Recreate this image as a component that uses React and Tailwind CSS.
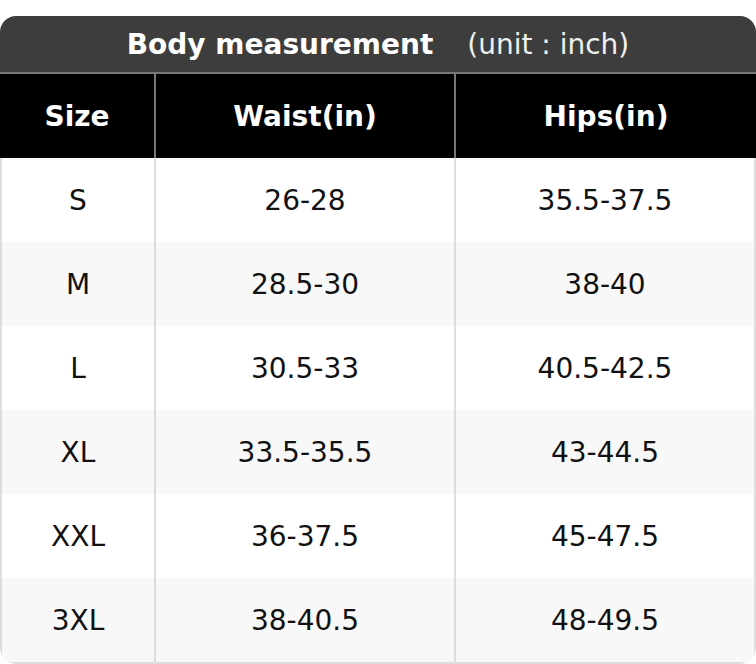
import React from 'react';

const rows = [
  ['S', '26-28', '35.5-37.5'],
  ['M', '28.5-30', '38-40'],
  ['L', '30.5-33', '40.5-42.5'],
  ['XL', '33.5-35.5', '43-44.5'],
  ['XXL', '36-37.5', '45-47.5'],
  ['3XL', '38-40.5', '48-49.5'],
];

const App = () => (
  <div className="min-h-screen bg-white pt-4" style={{ fontFamily: '"DejaVu Sans", sans-serif' }}>
    <div className="overflow-hidden rounded-2xl">
      <div className="flex h-[56px] items-center justify-center gap-[34px] bg-[#3d3d3d] pt-[2px] text-[28px] text-white">
        <span className="font-bold">Body measurement</span>
        <span className="text-[#f0f0f0]">(unit : inch)</span>
      </div>
      <div className="h-[2px] bg-[#777]" />
      <div className="grid h-[84px] grid-cols-[156px_300px_1fr] bg-black text-[28px] font-bold text-white">
        <div className="flex items-center justify-center border-r-2 border-[#777] pt-[2px]">Size</div>
        <div className="flex items-center justify-center border-r-2 border-[#777] pt-[2px]">Waist(in)</div>
        <div className="flex items-center justify-center pt-[2px]">Hips(in)</div>
      </div>
      <div className="rounded-b-2xl border-x-2 border-b-2 border-[#ddd]">
        {rows.map((r, i) => (
          <div
            key={r[0]}
            className={`grid h-[84px] grid-cols-[154px_300px_1fr] text-[28px] text-[#111] ${i % 2 ? 'bg-[#f8f8f8]' : 'bg-white'}`}
          >
            <div className="flex items-center justify-center border-r-2 border-[#ddd] pt-[2px]">{r[0]}</div>
            <div className="flex items-center justify-center border-r-2 border-[#ddd] pt-[2px]">{r[1]}</div>
            <div className="flex items-center justify-center pt-[2px]">{r[2]}</div>
          </div>
        ))}
      </div>
    </div>
  </div>
);

export default App;
